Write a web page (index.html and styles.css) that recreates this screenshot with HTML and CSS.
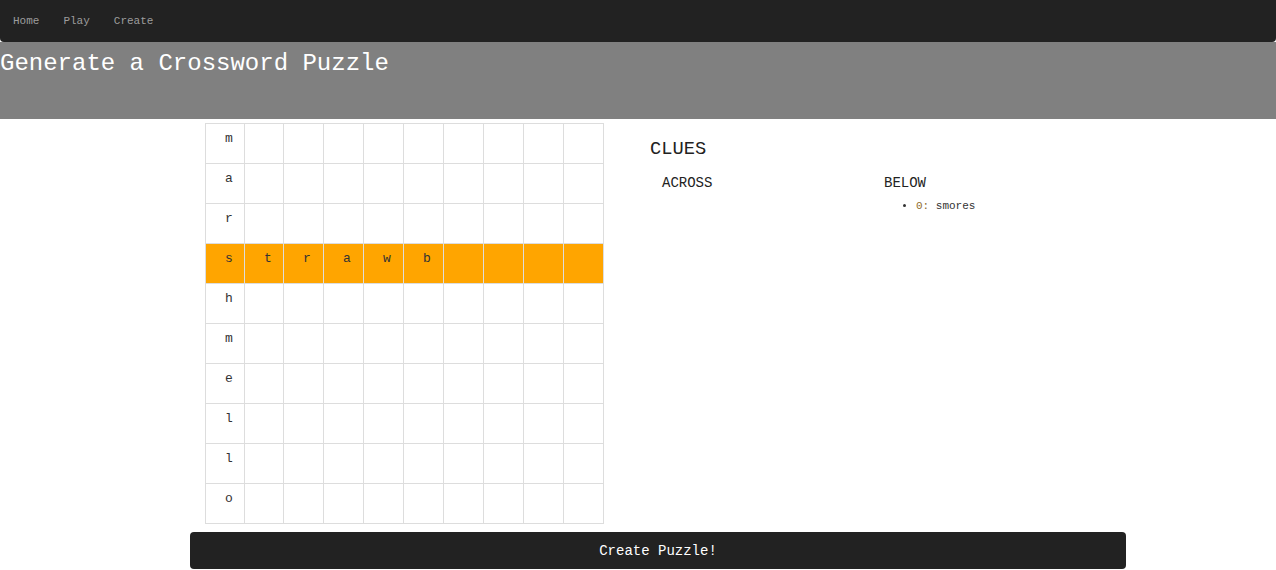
FILE: index.html
```html
<!DOCTYPE html>
<html>
<head>
<meta charset="utf-8">
<title>Create</title>
<link rel="stylesheet" href="styles.css">
</head>
<body>
<nav class="navbar">
  <a class="nav-link" href="#">Home</a>
  <a class="nav-link" href="#">Play</a>
  <a class="nav-link" href="#">Create</a>
</nav>
<header class="banner">
  <h1 class="title">Generate a Crossword Puzzle</h1>
</header>
<main class="main">
  <div class="row">
    <table class="board">
      <colgroup>
        <col class="c39"><col class="c39"><col class="c40"><col class="c40"><col class="c40"><col class="c40"><col class="c40"><col class="c40"><col class="c40"><col class="c40">
      </colgroup>
      <tbody>
        <tr><td>m</td><td></td><td></td><td></td><td></td><td></td><td></td><td></td><td></td><td></td></tr>
        <tr><td>a</td><td></td><td></td><td></td><td></td><td></td><td></td><td></td><td></td><td></td></tr>
        <tr><td>r</td><td></td><td></td><td></td><td></td><td></td><td></td><td></td><td></td><td></td></tr>
        <tr class="hl"><td>s</td><td>t</td><td>r</td><td>a</td><td>w</td><td>b</td><td></td><td></td><td></td><td></td></tr>
        <tr><td>h</td><td></td><td></td><td></td><td></td><td></td><td></td><td></td><td></td><td></td></tr>
        <tr><td>m</td><td></td><td></td><td></td><td></td><td></td><td></td><td></td><td></td><td></td></tr>
        <tr><td>e</td><td></td><td></td><td></td><td></td><td></td><td></td><td></td><td></td><td></td></tr>
        <tr><td>l</td><td></td><td></td><td></td><td></td><td></td><td></td><td></td><td></td><td></td></tr>
        <tr><td>l</td><td></td><td></td><td></td><td></td><td></td><td></td><td></td><td></td><td></td></tr>
        <tr><td>o</td><td></td><td></td><td></td><td></td><td></td><td></td><td></td><td></td><td></td></tr>
      </tbody>
    </table>
    <section class="clues">
      <h3 class="clues-title">CLUES</h3>
      <div class="clue-cols">
        <div class="clue-col">
          <h4 class="clue-head">ACROSS</h4>
        </div>
        <div class="clue-col">
          <h4 class="clue-head">BELOW</h4>
          <ul class="clue-list">
            <li><span class="num">0:</span> smores</li>
          </ul>
        </div>
      </div>
    </section>
  </div>
  <button class="create-btn" type="button">Create Puzzle!</button>
</main>
</body>
</html>
```
FILE: styles.css
```css
html, body {
  margin: 0;
  padding: 0;
  background: #fff;
  font-family: "Liberation Mono", "DejaVu Sans Mono", monospace;
  color: #333;
}

.navbar {
  display: flex;
  align-items: center;
  height: 42px;
  padding-left: 1px;
  background: #222;
  border-radius: 0 0 4px 4px;
}

.nav-link {
  padding: 0 12px;
  font-size: 11px;
  color: #9d9d9d;
  text-decoration: none;
}

.banner {
  height: 77px;
  background: #808080;
  box-sizing: border-box;
  padding-top: 8px;
}

.title {
  margin: 0;
  font-size: 24px;
  font-weight: normal;
  line-height: 28px;
  color: #fff;
}

.main {
  width: 936px;
  margin-left: 190px;
  padding-top: 4px;
}

.row {
  display: flex;
  align-items: flex-start;
}

.board {
  margin-left: 15px;
  border-collapse: collapse;
  table-layout: fixed;
  width: 399px;
}

.c39 { width: 39px; }
.c40 { width: 40px; }

.board td {
  height: 40px;
  box-sizing: border-box;
  border: 1px solid #ddd;
  padding: 6px 0 0 19px;
  vertical-align: top;
  font-size: 13px;
  line-height: 18px;
  color: #333;
}

.board tr.hl td {
  background: #ffa500;
}

.clues {
  margin-left: 46px;
  flex: 1;
}

.clues-title {
  margin: 15px 0 0;
  font-size: 18.72px;
  font-weight: normal;
  line-height: 22px;
  color: #222;
}

.clue-cols {
  display: flex;
  margin-top: 14px;
}

.clue-col {
  box-sizing: border-box;
  width: 222px;
  padding-left: 12px;
}

.clue-head {
  margin: 0;
  font-size: 14px;
  font-weight: normal;
  line-height: 18px;
  color: #222;
}

.clue-list {
  margin: 7px 0 0;
  padding-left: 32px;
  font-size: 11px;
  line-height: 15px;
  color: #333;
}

.num {
  color: #8f6d2a;
}

.create-btn {
  display: block;
  width: 936px;
  height: 37px;
  margin-top: 8px;
  border: none;
  border-radius: 4px;
  background: #222;
  color: #fff;
  font-family: "Liberation Mono", "DejaVu Sans Mono", monospace;
  font-size: 14px;
  text-align: center;
  padding: 0;
}
```
